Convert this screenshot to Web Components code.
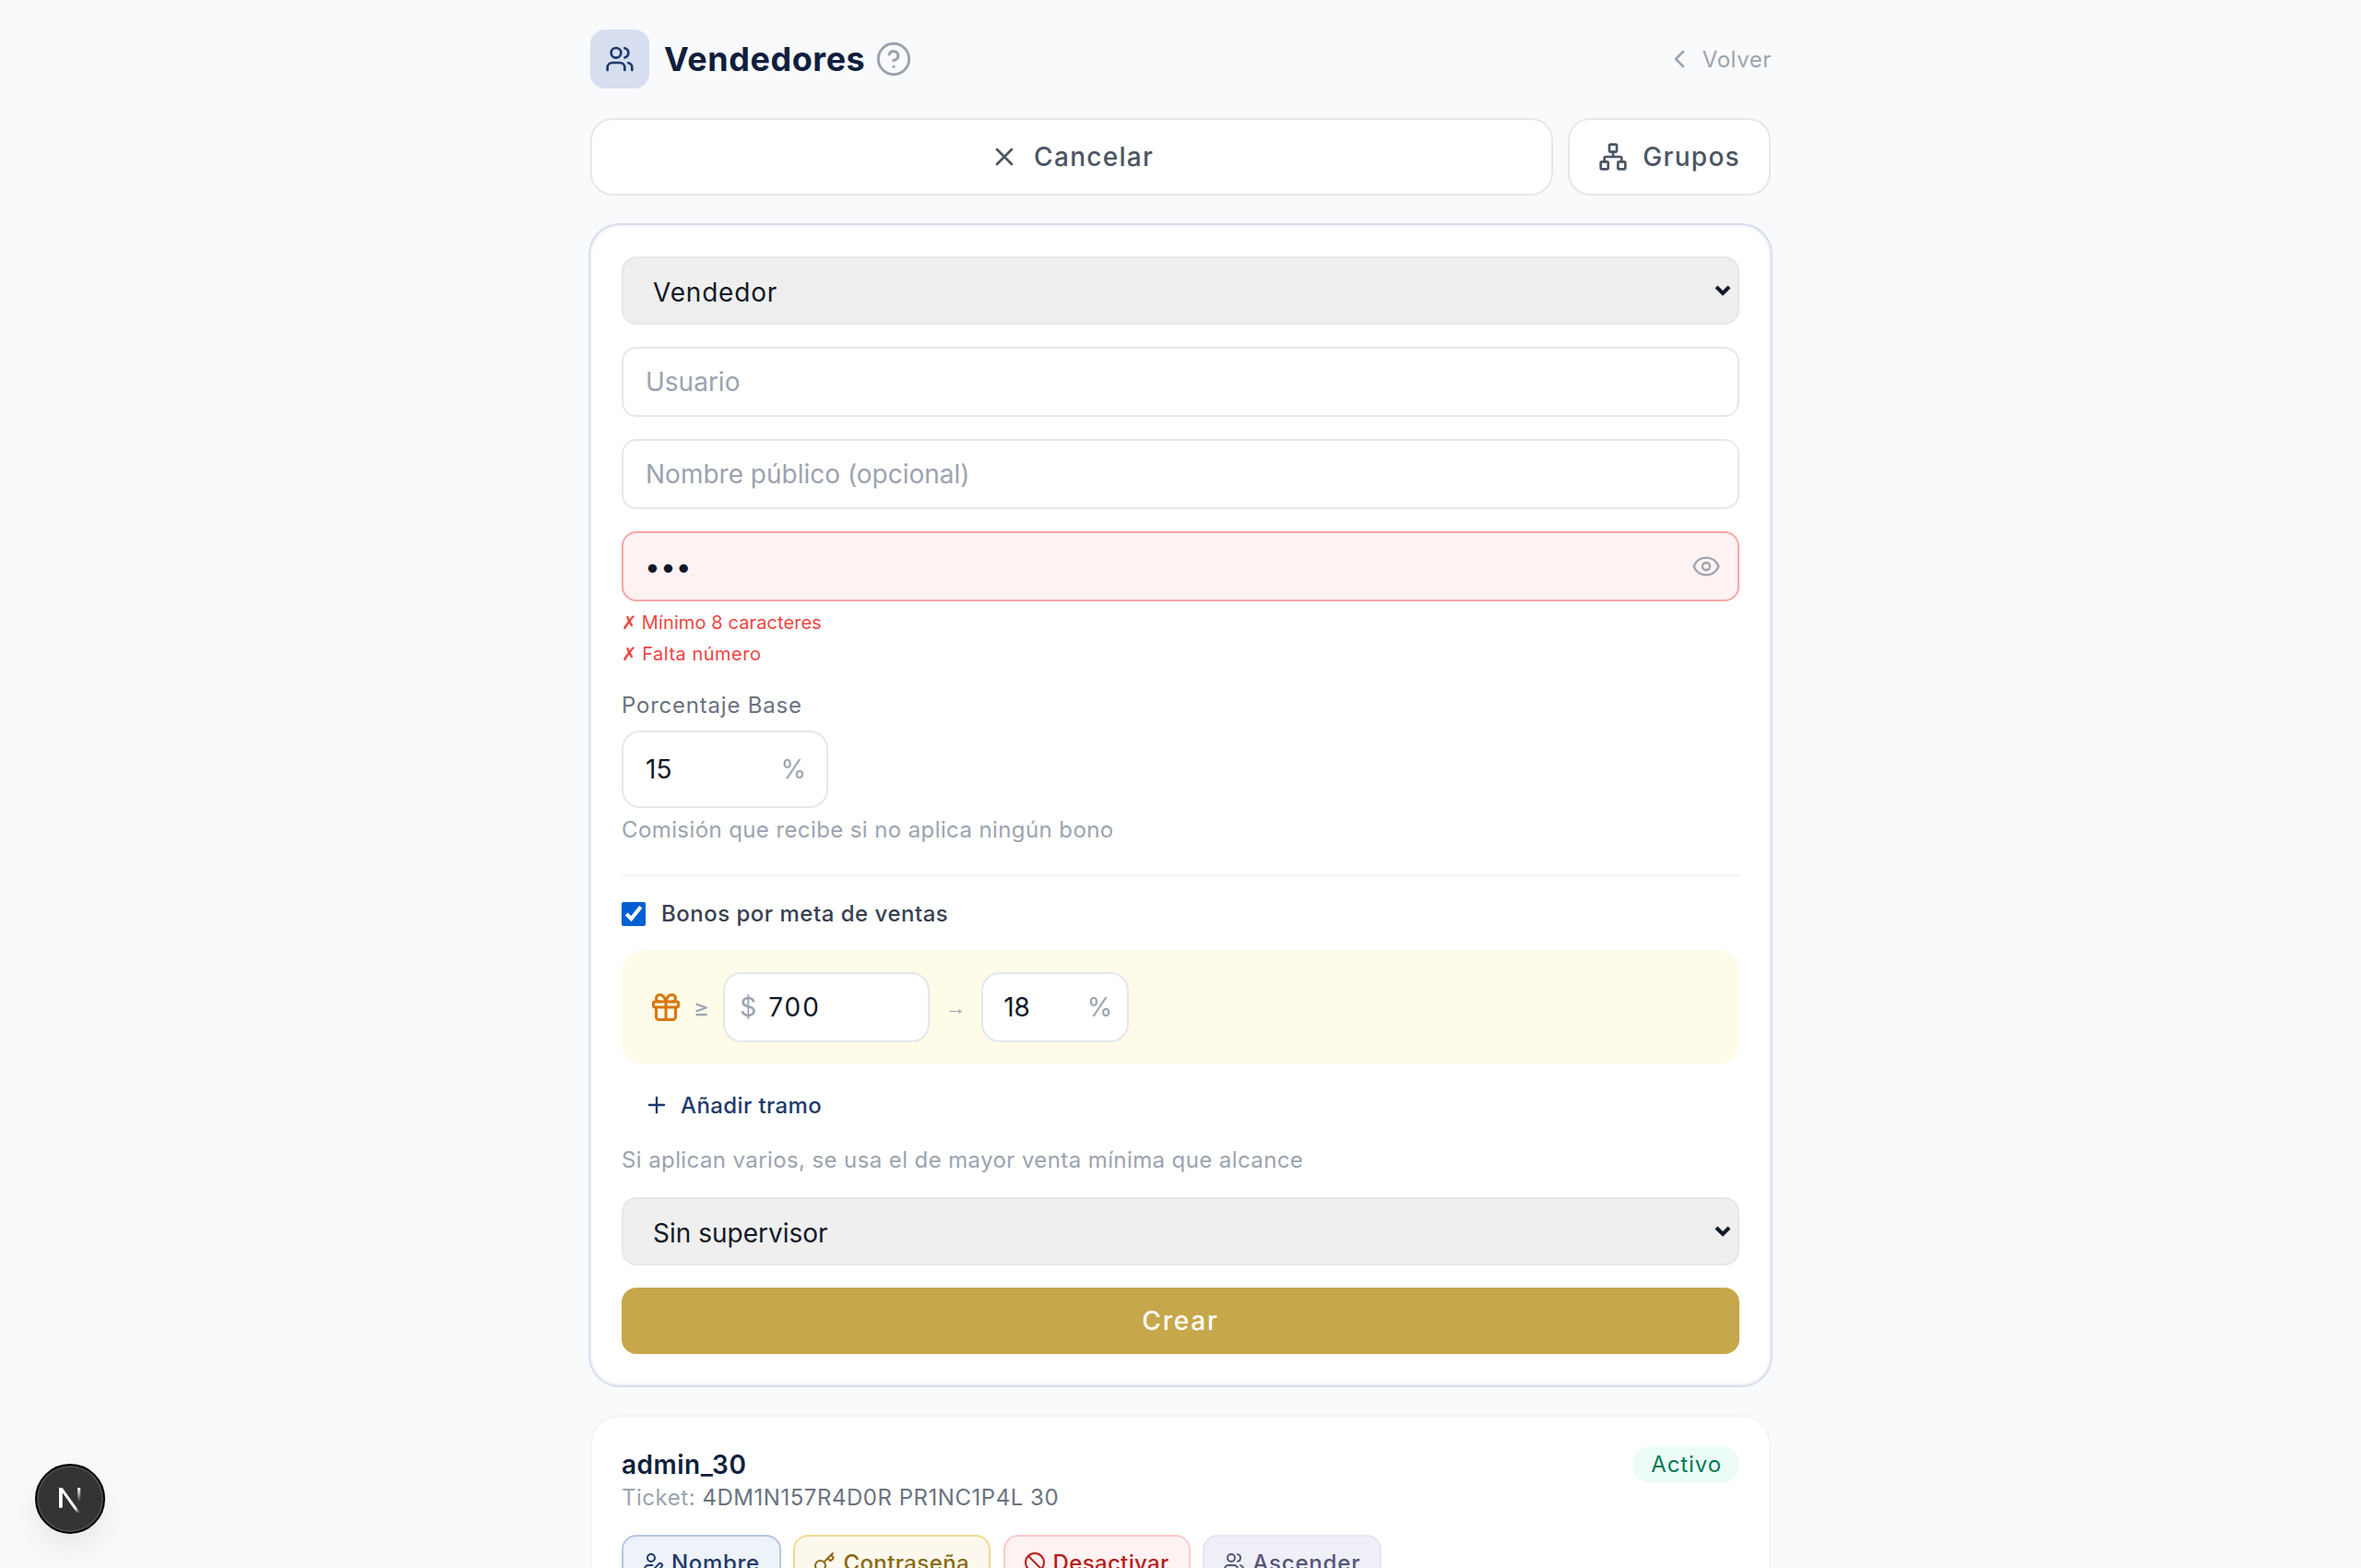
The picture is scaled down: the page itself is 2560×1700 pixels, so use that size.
<!DOCTYPE html>
<html lang="es"><head><meta charset="utf-8"><title>Vendedores</title>
<style>
html,body{margin:0;height:1700px;overflow:hidden;background:#f9fafc}
body{font-family:Inter,"Liberation Sans",sans-serif;color:#111827}
</style></head><body>
<vs-page>
  <vs-header></vs-header>
  <vs-actions></vs-actions>
  <vs-form></vs-form>
  <vs-seller name="admin_30" ticket="4DM1N157R4D0R PR1NC1P4L 30"></vs-seller>
</vs-page>
<vs-devbadge></vs-devbadge>
<script>
const I={
users:'<path d="M16 21v-2a4 4 0 0 0-4-4H6a4 4 0 0 0-4 4v2"/><path d="M16 3.128a4 4 0 0 1 0 7.744"/><path d="M22 21v-2a4 4 0 0 0-3-3.87"/><circle cx="9" cy="7" r="4"/>',
help:'<circle cx="12" cy="12" r="10"/><path d="M9.09 9a3 3 0 0 1 5.83 1c0 2-3 3-3 3"/><path d="M12 17h.01"/>',
chevl:'<path d="m15 18-6-6 6-6"/>',
x:'<path d="M18 6 6 18"/><path d="m6 6 12 12"/>',
network:'<rect x="16" y="16" width="6" height="6" rx="1"/><rect x="2" y="16" width="6" height="6" rx="1"/><rect x="9" y="2" width="6" height="6" rx="1"/><path d="M5 16v-3a1 1 0 0 1 1-1h12a1 1 0 0 1 1 1v3"/><path d="M12 12V8"/>',
eye:'<path d="M2.062 12.348a1 1 0 0 1 0-.696 10.75 10.75 0 0 1 19.876 0 1 1 0 0 1 0 .696 10.75 10.75 0 0 1-19.876 0"/><circle cx="12" cy="12" r="3"/>',
gift:'<rect x="3" y="8" width="18" height="4" rx="1"/><path d="M12 8v13"/><path d="M19 12v7a2 2 0 0 1-2 2H7a2 2 0 0 1-2-2v-7"/><path d="M7.5 8a2.5 2.5 0 0 1 0-5A4.8 8 0 0 1 12 8a4.8 8 0 0 1 4.5-5 2.5 2.5 0 0 1 0 5"/>',
plus:'<path d="M5 12h14"/><path d="M12 5v14"/>',
key:'<path d="m15.5 7.5 2.3 2.3a1 1 0 0 0 1.4 0l2.1-2.1a1 1 0 0 0 0-1.4L19 4"/><path d="m21 2-9.6 9.6"/><circle cx="7.5" cy="15.5" r="5.5"/>',
ban:'<circle cx="12" cy="12" r="10"/><path d="m4.9 4.9 14.2 14.2"/>',
userpen:'<path d="M11.5 15H7a4 4 0 0 0-4 4v2"/><path d="M21.378 16.626a1 1 0 0 0-3.004-3.004l-4.01 4.012a2 2 0 0 0-.506.854l-.837 2.87a.5.5 0 0 0 .62.62l2.87-.837a2 2 0 0 0 .854-.506z"/><circle cx="10" cy="7" r="4"/>'
};
const svg=(n,s,w=2)=>`<svg xmlns="http://www.w3.org/2000/svg" width="${s}" height="${s}" viewBox="0 0 24 24" fill="none" stroke="currentColor" stroke-width="${w}" stroke-linecap="round" stroke-linejoin="round" aria-hidden="true" style="flex:none;display:block">${I[n]}</svg>`;
class Base extends HTMLElement{
  constructor(){super();this.attachShadow({mode:'open'})}
  connectedCallback(){this.render()}
}
const def=(n,css,html)=>customElements.define(n,class extends Base{render(){this.shadowRoot.innerHTML=`<style>${css}</style>${html(this)}`}});
const a=(e,k,d='')=>e.hasAttribute(k)?e.getAttribute(k):d;

def('vs-page',`:host{display:block;width:1280px;margin:0 auto;padding-top:32px}`,()=>`<slot></slot>`);

def('vs-header',`:host{display:flex;align-items:center;justify-content:space-between;height:64px;margin-bottom:32px}
.l{display:flex;align-items:center}
.ic{width:64px;height:64px;border-radius:16px;background:#d6deef;color:#1e3a6b;display:flex;align-items:center;justify-content:center;margin-right:16px}
h1{margin:0;font-size:36px;line-height:56px;font-weight:700;color:#0f1f3d;letter-spacing:.55px;margin-right:11px}
.h{color:#9ca3af;display:block}
a{display:flex;align-items:center;gap:9px;color:#9ca3af;font-size:24px;letter-spacing:.6px;text-decoration:none;margin-right:-1px}`,
()=>`<div class="l"><div class="ic">${svg('users',32,2)}</div><h1>Vendedores</h1><span class="h">${svg('help',40,1.8)}</span></div><a href="#">${svg('chevl',32,2)}Volver</a>`);

def('vs-top-btn',`:host{display:flex;box-sizing:border-box;height:84px;align-items:center;justify-content:center;gap:16px;padding:0 31px;background:#fff;border:2px solid #e5e7eb;border-radius:24px;color:#4b5563;font-size:28px;font-weight:500;letter-spacing:1.3px}
:host(.grow){flex:1}`,
e=>`${svg(a(e,'icon'),32,2)}<slot></slot>`);

def('vs-actions',`:host{display:flex;gap:16px;margin-bottom:32px}`,
()=>`<vs-top-btn class="grow" icon="x">Cancelar</vs-top-btn><vs-top-btn icon="network">Grupos</vs-top-btn>`);

def('vs-select',`:host{display:block;position:relative}
select{display:block;box-sizing:border-box;width:100%;height:74px;padding:3px 32px 0;font:400 28px Inter,sans-serif;color:#111827;background-color:#efefef;border:2px solid #e5e7eb;border-radius:16px;appearance:none}
svg{position:absolute;right:9px;top:30px;pointer-events:none}`,
e=>`<select style="letter-spacing:${a(e,'track','0')}px"><option>${a(e,'value')}</option></select><svg width="18" height="14" viewBox="0 0 18 14" fill="none" style="right:9px"><path d="M2 3l7 7 7-7" stroke="#111827" stroke-width="4"/></svg>`);

def('vs-input',`:host{display:flex;box-sizing:border-box;height:76px;align-items:center;padding:0 24px;background:#fff;border:2px solid #e5e7eb;border-radius:16px;font-size:28px;color:#9ca3af}
:host([error]){background:#fef2f2;border-color:#fca5a5;color:#111827;justify-content:space-between;padding-right:18px}
.e{color:#9ca3af}`,
e=>`<slot></slot>${e.hasAttribute('error')?`<span class="e">${svg('eye',32,1.75)}</span>`:''}`);

def('vs-affix',`:host{display:flex;box-sizing:border-box;align-items:center;background:#fff;border:2px solid #e5e7eb;border-radius:20px;height:76px;padding:0 22px 0 24px;font-size:28px;color:#111827;justify-content:space-between}
.s{color:#9ca3af}:host([prefix]){justify-content:flex-start;gap:11px;padding:0 16px;letter-spacing:2px}:host(.tight){padding:0 16px 0 22px}`,
e=>`${e.hasAttribute('prefix')?`<span class="s">${a(e,'prefix')}</span>`:''}<slot></slot>${e.hasAttribute('suffix')?`<span class="s">${a(e,'suffix')}</span>`:''}`);

def('vs-form',`:host{display:block;box-sizing:border-box;background:#fff;border:2px solid #f3f4f6;box-shadow:0 0 0 2px #d6deef;border-radius:32px;padding:32px;margin-bottom:32px}
.g{margin-top:24px}
.err{color:#ef4444;font-size:20px;line-height:34px;letter-spacing:.1px}
.err i{font:normal 20px "DejaVu Sans",sans-serif;margin-right:5px}
.errs{margin-top:6px}
.lab{display:block;color:#6b7280;font-size:24px;line-height:32px;letter-spacing:.78px}
.help{color:#9ca3af;font-size:24px;line-height:36px;letter-spacing:.4px}
hr{border:0;border-top:2px solid #f3f4f6;margin:30px 0 0}
.chk{display:flex;align-items:center;height:40px;margin-top:20px;gap:17px;color:#374151;font-size:24px;font-weight:500;letter-spacing:.5px}
input{margin:1px 0 0;width:26px;height:26px;accent-color:#005fd4}
.panel{display:flex;align-items:center;height:124px;box-sizing:border-box;margin-top:20px;padding:0 30px;background:#fefbe9;border-radius:24px;color:#9ca3af;font-size:26px}
.gift{color:#d97706}
.plus{display:flex;align-items:center;height:40px;margin-top:24px;padding-left:24px;gap:12px;color:#1e3a6b;font-size:24px;font-weight:500;letter-spacing:.4px}
.arrow{font:22px "Liberation Sans",sans-serif;margin:2px 17px 0 17px}
button{display:block;width:100%;height:72px;border:0;border-radius:16px;background:#c7a74b;color:#fff;font:500 28px Inter,sans-serif;letter-spacing:1.8px}`,
()=>`<vs-select track=".8" value="Vendedor"></vs-select>
<vs-input class="g">Usuario</vs-input>
<vs-input class="g">Nombre público (opcional)</vs-input>
<vs-input class="g" error><span style="font-size:30px;margin-left:-1px">•••</span></vs-input>
<div class="errs"><div class="err"><i>✗</i>Mínimo 8 caracteres</div><div class="err" style="letter-spacing:.5px"><i>✗</i>Falta número</div></div>
<div class="lab" style="margin-top:23px">Porcentaje Base</div>
<vs-affix suffix="%" style="margin-top:11px;width:224px;height:84px">15</vs-affix>
<div class="help" style="margin-top:6px">Comisión que recibe si no aplica ningún bono</div>
<hr>
<div class="chk"><input type="checkbox" checked><span>Bonos por meta de ventas</span></div>
<div class="panel"><span class="gift">${svg('gift',36,2)}</span><span style="margin:0 15px 0 12px">≥</span>
<vs-affix prefix="$" style="width:224px;height:76px">700</vs-affix><span class="arrow">→</span><vs-affix class="tight" suffix="%" style="width:160px;height:76px">18</vs-affix></div>
<div class="plus">${svg('plus',28,2)}<span>Añadir tramo</span></div>
<div class="help" style="margin-top:22px">Si aplican varios, se usa el de mayor venta mínima que alcance</div>
<vs-select class="g" style="margin-top:22px" value="Sin supervisor"></vs-select>
<button class="g" type="button">Crear</button>`);

def('vs-act',`:host{display:flex;box-sizing:border-box;align-items:center;gap:8px;height:60px;padding:0 21px 0 20px;border:2px solid;border-radius:16px;font-size:24px;font-weight:500;letter-spacing:.7px}
:host([tone=blue]){background:#eef2f9;border-color:#b6c6e2;color:#1e3a6b}
:host([tone=gold]){background:#fcf8ee;border-color:#f3d98f;color:#8a6a10}
:host([tone=red]){background:#fef2f2;border-color:#fecaca;color:#b91c1c}
:host([tone=gray]){background:#efeff8;border-color:#e6e6f1;color:#55557a}`,
e=>`${svg(a(e,'icon'),24,2)}<slot></slot>`);

def('vs-seller',`:host{display:block;box-sizing:border-box;background:#fff;border:2px solid #f3f4f6;border-radius:32px;padding:32px;height:300px}
.t{display:flex;justify-content:space-between;align-items:flex-start}
.n{font-size:28px;line-height:40px;font-weight:600;color:#0f1f3d;letter-spacing:.5px}
.k{font-size:24px;line-height:32px;color:#9ca3af;letter-spacing:.53px}
.k b{font-weight:400;color:#6b7280}
.p{background:#ecfdf5;color:#047857;border-radius:20px;height:40px;line-height:40px;padding:0 19px 0 20px;font-size:24px;font-weight:400;letter-spacing:.9px}
.r{display:flex;gap:13.5px;margin-top:24px}`,
e=>`<div class="t"><div><div class="n">${a(e,'name')}</div><div class="k">Ticket: <b>${a(e,'ticket')}</b></div></div><div class="p">Activo</div></div>
<div class="r"><vs-act tone="blue" icon="userpen">Nombre</vs-act><vs-act tone="gold" icon="key" style="letter-spacing:.4px">Contraseña</vs-act><vs-act tone="red" icon="ban" style="letter-spacing:.35px">Desactivar</vs-act><vs-act tone="gray" icon="users" style="letter-spacing:.85px">Ascender</vs-act></div>`);

def('vs-devbadge',`:host{position:fixed;left:38px;top:1587px;width:76px;height:76px;box-sizing:border-box;border-radius:50%;background:#333;border:2px solid #000;box-shadow:inset 0 0 0 2px #4a4a4a,0 16px 32px rgba(0,0,0,.08);display:flex;align-items:center;justify-content:center}`,
()=>`<svg width="28" height="30" viewBox="0 0 28 30" fill="none" style="overflow:visible"><defs><linearGradient id="a" x1="12" y1="12" x2="25" y2="30" gradientUnits="userSpaceOnUse"><stop stop-color="#fff"/><stop offset=".65" stop-color="#fff"/><stop offset="1" stop-color="#fff" stop-opacity="0"/></linearGradient><linearGradient id="b" x1="24" y1="3" x2="24" y2="18" gradientUnits="userSpaceOnUse"><stop stop-color="#fff"/><stop offset="1" stop-color="#fff" stop-opacity="0"/></linearGradient></defs><path d="M2 3h3.6L25 30h-3.8L5.5 8V24.5H2z" fill="url(#a)"/><path d="M2 3h3.5v21.5H2z" fill="#fff"/><rect x="22" y="3" width="3.2" height="15" fill="url(#b)"/></svg>`);
</script>
</body></html>
